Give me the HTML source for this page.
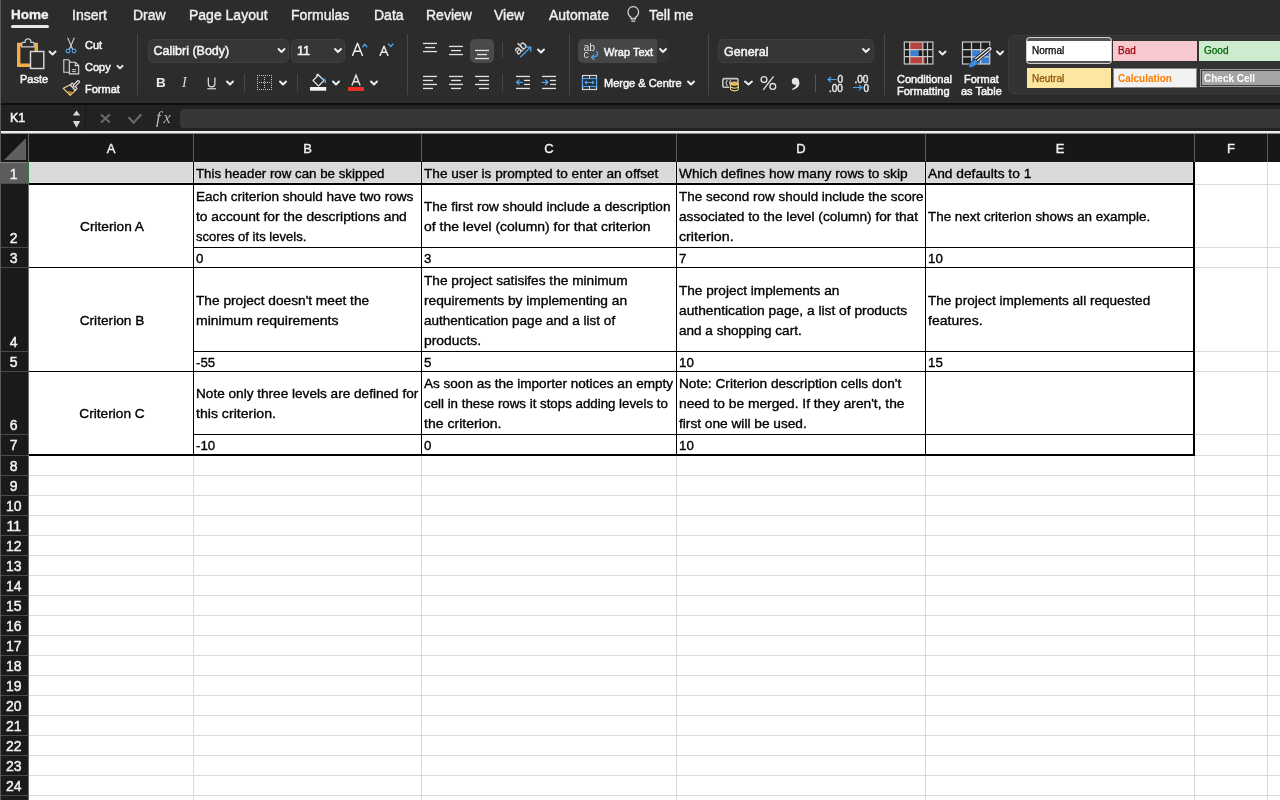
<!DOCTYPE html>
<html><head><meta charset="utf-8"><title>Excel</title>
<style>
*{margin:0;padding:0;box-sizing:border-box}
html,body{width:1280px;height:800px;overflow:hidden}
body{-webkit-font-smoothing:antialiased;background:#2c2c2c;font-family:"Liberation Sans",sans-serif;position:relative;color:#e8e8e8}
.a{position:absolute}
.tab{position:absolute;top:7px;font-size:14px;line-height:16px;color:#f0f0f0;white-space:nowrap;-webkit-text-stroke:0.4px #f0f0f0}
.rl{position:absolute;font-size:12px;line-height:14px;color:#ececec;white-space:nowrap}
.sep{position:absolute;width:1px;background:#4a4a4a}
.chev{position:absolute}
.cell{position:absolute;color:#000;font-size:13.3px;line-height:20px;white-space:nowrap;-webkit-text-stroke:0.35px #000}
.hdr{position:absolute;top:134px;height:27px;background:#171717;color:#f2f2f2;font-size:13px;text-align:center;line-height:29px;-webkit-text-stroke:0.35px #f2f2f2}
.rh{position:absolute;left:0.5px;width:26.5px;color:#f2f2f2;font-size:14px;text-align:center;-webkit-text-stroke:0.45px #f2f2f2}
</style></head>
<body><div style="position:absolute;left:0;top:0;width:1280px;height:800px;will-change:transform">
<!-- ribbon backgrounds -->
<div class="a" style="left:0;top:103px;width:1280px;height:2px;background:#0e0e0e"></div>
<div class="a" style="left:0;top:105px;width:1280px;height:26px;background:#222222"></div>
<div class="a" style="left:180px;top:109px;width:1100px;height:19px;border-radius:4px 0 0 4px;background:#373737"></div>
<div class="a" style="left:85px;top:105px;width:1px;height:26px;background:#1a1a1a"></div>
<!-- dropdown boxes -->
<div class="a" style="left:148px;top:39px;width:141px;height:24px;border-radius:5px;background:#363636;border:1px solid #3f3f3f"></div>
<div class="a" style="left:291px;top:39px;width:54px;height:24px;border-radius:5px;background:#363636;border:1px solid #3f3f3f"></div>
<div class="a" style="left:718px;top:39px;width:156px;height:24px;border-radius:5px;background:#363636;border:1px solid #3f3f3f"></div>
<div class="a" style="left:470px;top:39px;width:24px;height:24px;border-radius:5px;background:#4a4a4a"></div>
<div class="a" style="left:578px;top:39px;width:79px;height:24px;border-radius:5px 0 0 5px;background:#464646"></div>
<div class="a" style="left:657px;top:39px;width:12px;height:24px;border-radius:0 5px 5px 0;background:#313131"></div>
<!-- styles gallery -->
<div class="a" style="left:1008px;top:35px;width:280px;height:59px;border-radius:6px;background:#333333;border:1px solid #3c3c3c"></div>
<div class="a" style="left:1026px;top:37px;width:86px;height:27px;border-radius:4px;background:#cfcfcf"></div>
<div class="a" style="left:1027px;top:38px;width:84px;height:25px;border-radius:3px;background:#555555"></div>
<div class="a" style="left:1027px;top:41px;width:84px;height:20px;background:#ffffff"></div>
<div class="a" style="left:1113px;top:41px;width:84px;height:20px;background:#f7c9cf"></div>
<div class="a" style="left:1199px;top:41px;width:90px;height:20px;background:#cdeccf"></div>
<div class="a" style="left:1027px;top:68px;width:84px;height:20px;background:#fbe7a1"></div>
<div class="a" style="left:1113px;top:68px;width:84px;height:20px;background:#f2f2f2;border:1px solid #8a8a8a"></div>
<div class="a" style="left:1200px;top:69px;width:90px;height:18px;background:#9a9a9a"></div>
<div class="a" style="left:1201px;top:70px;width:90px;height:16px;background:#3c3c3c"></div>
<div class="a" style="left:1202px;top:71px;width:90px;height:14px;background:#a5a5a5"></div>

<svg class="a" style="left:0;top:0" width="1280" height="131" viewBox="0 0 1280 131">
<g font-family="Liberation Sans" fill="#f4f4f4" stroke="#f4f4f4" stroke-width="0.5" font-size="11">
 <text x="20" y="83">Paste</text>
 <text x="85" y="49">Cut</text>
 <text x="85" y="71">Copy</text>
 <text x="85" y="93">Format</text>
 <text x="153.5" y="55" font-size="12.5">Calibri (Body)</text>
 <text x="297" y="55" font-size="12.5">11</text>
 <text x="604" y="55.5">Wrap Text</text>
 <text x="604" y="87">Merge &amp; Centre</text>
 <text x="724" y="55.5" font-size="12.5">General</text>
 <text x="897" y="83">Conditional</text>
 <text x="897" y="95">Formatting</text>
 <text x="964" y="83">Format</text>
 <text x="961" y="95">as Table</text>
 <text x="10" y="122" font-size="12.5">K1</text>
</g>
<g font-family="Liberation Sans" font-size="10" stroke-width="0.25">
 <text x="1032" y="54" fill="#000" stroke="#000">Normal</text>
 <text x="1118" y="54" fill="#9c0006" stroke="#9c0006">Bad</text>
 <text x="1204" y="54" fill="#006100" stroke="#006100">Good</text>
 <text x="1032" y="81.5" fill="#8a5200" stroke="#8a5200">Neutral</text>
 <text x="1118" y="81.5" fill="#fa7d00" font-weight="bold">Calculation</text>
 <text x="1204" y="81.5" fill="#fff" font-weight="bold">Check Cell</text>
</g>
<!-- separators -->
<g fill="#474747">
 <rect x="137" y="34" width="1" height="61"/>
 <rect x="407" y="34" width="1" height="61"/>
 <rect x="569" y="34" width="1" height="61"/>
 <rect x="708" y="34" width="1" height="61"/>
 <rect x="884" y="34" width="1" height="61"/>
 <rect x="244" y="74" width="1" height="18"/>
 <rect x="297" y="74" width="1" height="18"/>
 <rect x="502" y="42" width="1" height="16"/>
 <rect x="502" y="74" width="1" height="18"/>
 <rect x="815" y="74" width="1" height="18" fill="#555"/>
</g>
<!-- chevrons -->
<g fill="none" stroke="#f0f0f0" stroke-width="1.9" stroke-linecap="round" stroke-linejoin="round">
 <polyline points="49.5,51.5 52.5,54.5 55.5,51.5"/>
 <polyline points="117.5,65.8 120,68.3 122.5,65.8"/>
 <polyline points="278.5,49 281.5,52 284.5,49"/>
 <polyline points="335,49 338,52 341,49"/>
 <polyline points="227,81.5 230,84.5 233,81.5"/>
 <polyline points="280,81.5 283,84.5 286,81.5"/>
 <polyline points="333,81.5 336,84.5 339,81.5"/>
 <polyline points="371,81.5 374,84.5 377,81.5"/>
 <polyline points="538,49.5 541,52.5 544,49.5"/>
 <polyline points="660,49 663,52 666,49"/>
 <polyline points="688,81.5 691,84.5 694,81.5"/>
 <polyline points="863,49 866,52 869,49"/>
 <polyline points="745,81.5 748.5,84.5 752,81.5"/>
 <polyline points="939.5,51.5 942.5,54.5 945.5,51.5"/>
 <polyline points="997,51.5 1000,54.5 1003,51.5"/>
</g>
</svg>
<svg class="a" style="left:0;top:0" width="1280" height="131" viewBox="0 0 1280 131">
<!-- Paste -->
<path d="M30,65.3 H18.7 V44.5 H36.3 V51" fill="none" stroke="#f2ad45" stroke-width="3.4"/>
<path d="M21.8,46.8 V43.4 Q21.8,42.4 22.8,42.4 H25 Q25,38.9 28,38.9 Q31,38.9 31,42.4 H33.2 Q34.2,42.4 34.2,43.4 V46.8 Z" fill="#2c2c2c" stroke="#cdcdcd" stroke-width="1.2"/>
<rect x="30.5" y="51.5" width="13.3" height="17" fill="#2c2c2c" stroke="#dcdcdc" stroke-width="1.4"/>
<!-- Scissors -->
<g fill="none">
 <path d="M67.6,37.6 L72.6,49.3 M74.4,37.6 L69.4,49.3" stroke="#d8d8d8" stroke-width="1.1"/>
 <circle cx="68" cy="51" r="1.9" stroke="#4ea1ea" stroke-width="1.1"/>
 <circle cx="74" cy="51" r="1.9" stroke="#4ea1ea" stroke-width="1.1"/>
</g>
<!-- Copy -->
<g fill="#2c2c2c" stroke="#d8d8d8" stroke-width="1.1">
 <path d="M63.8,59.8 H68.5 L70,61.5 V72.2 H63.8 Z"/>
 <path d="M69.3,62.2 H75.3 L78.7,65.6 V73.9 H69.3 Z"/>
 <path d="M75.3,62.2 V65.6 H78.7" fill="none"/>
 <path d="M71.8,69.6 H76 M71.8,71.6 H76" stroke-width="0.9"/>
</g>
<!-- Format painter -->
<g stroke-linejoin="round">
 <polygon points="63.3,88.3 70.3,84.8 75.3,90.3 70.2,95.3" fill="#2c2c2c" stroke="#f1da8c" stroke-width="1.1"/>
 <polygon points="66.8,90.9 72.8,91.9 70,94.4" fill="#d9841f"/>
 <polygon points="70.3,84.8 72.3,83 77,88.3 75.3,90.3" fill="#2c2c2c" stroke="#e8e8e8" stroke-width="1.1"/>
 <path d="M74.3,85.8 L78.3,81.8" stroke="#e8e8e8" stroke-width="3.4" stroke-linecap="round"/>
 <path d="M74.3,85.8 L78.3,81.8" stroke="#2c2c2c" stroke-width="1.2" stroke-linecap="round"/>
</g>
<!-- Font grow / shrink -->
<g fill="none" stroke="#ededed" stroke-width="1.45" stroke-linejoin="round">
 <path d="M352.4,56 L357.5,43.3 L362.6,56 M354.4,51.2 H360.6"/>
 <path d="M379.9,56 L384,46.2 L388.1,56 M381.6,52.3 H386.4"/>
</g>
<g fill="none" stroke="#4ea1ea" stroke-width="1.3" stroke-linecap="round">
 <path d="M362.5,46.8 L364.8,44.2 L367,46.8"/>
 <path d="M388.5,44 L390.8,46.6 L393,44"/>
</g>
<!-- B I U -->
<text x="156" y="87.3" font-family="Liberation Sans" font-weight="bold" font-size="13.5" fill="#ececec">B</text>
<text x="182" y="87" font-family="Liberation Serif" font-style="italic" font-size="14" fill="#dcdcdc">I</text>
<path d="M208.3,77.5 V83.5 a3.3,3.3 0 0 0 6.6,0 V77.5" fill="none" stroke="#e6e6e6" stroke-width="1.2"/>
<rect x="207.3" y="88.2" width="8.6" height="1.1" fill="#e6e6e6"/>
<!-- Borders dotted --><g fill="#c4c4c4"><rect x="257" y="75" width="1" height="1"/><rect x="257" y="77" width="1" height="1"/><rect x="257" y="79" width="1" height="1"/><rect x="257" y="81" width="1" height="1"/><rect x="257" y="83" width="1" height="1"/><rect x="257" y="85" width="1" height="1"/><rect x="257" y="87" width="1" height="1"/><rect x="257" y="89" width="1" height="1"/><rect x="259" y="75" width="1" height="1"/><rect x="259" y="82" width="1" height="1"/><rect x="259" y="89" width="1" height="1"/><rect x="261" y="75" width="1" height="1"/><rect x="261" y="82" width="1" height="1"/><rect x="261" y="89" width="1" height="1"/><rect x="263" y="75" width="1" height="1"/><rect x="263" y="82" width="1" height="1"/><rect x="263" y="89" width="1" height="1"/><rect x="264" y="77" width="1" height="1"/><rect x="264" y="79" width="1" height="1"/><rect x="264" y="81" width="1" height="1"/><rect x="264" y="83" width="1" height="1"/><rect x="264" y="85" width="1" height="1"/><rect x="264" y="87" width="1" height="1"/><rect x="265" y="75" width="1" height="1"/><rect x="265" y="82" width="1" height="1"/><rect x="265" y="89" width="1" height="1"/><rect x="267" y="75" width="1" height="1"/><rect x="267" y="82" width="1" height="1"/><rect x="267" y="89" width="1" height="1"/><rect x="269" y="75" width="1" height="1"/><rect x="269" y="82" width="1" height="1"/><rect x="269" y="89" width="1" height="1"/><rect x="271" y="75" width="1" height="1"/><rect x="271" y="77" width="1" height="1"/><rect x="271" y="79" width="1" height="1"/><rect x="271" y="81" width="1" height="1"/><rect x="271" y="83" width="1" height="1"/><rect x="271" y="85" width="1" height="1"/><rect x="271" y="87" width="1" height="1"/><rect x="271" y="89" width="1" height="1"/></g>
<!-- Fill bucket -->
<path d="M313,80.5 L318.5,75 L324,80.5 L318.5,86 Z" fill="#2c2c2c" stroke="#e0e0e0" stroke-width="1.2" stroke-linejoin="round"/>
<path d="M316,75.5 L318.5,73.8" stroke="#e0e0e0" stroke-width="1.1"/>
<path d="M322.5,79 Q325.5,78.5 325.5,83" fill="none" stroke="#5aa8ea" stroke-width="1.5"/>
<rect x="310" y="87" width="16.2" height="3.7" fill="#f4f4f4"/>
<!-- Font color -->
<path d="M351.9,85.5 L356,75.2 L360.1,85.5 M353.4,81.8 H358.6" fill="none" stroke="#e6e6e6" stroke-width="1.4"/>
<rect x="348" y="87" width="16" height="4" fill="#e8312a"/>
<!-- Alignment icons -->
<g fill="#e3e3e3">
 <rect x="423" y="42.8" width="14" height="1.3"/><rect x="425" y="46.9" width="10" height="1.3"/><rect x="423" y="50.9" width="14" height="1.3"/>
 <rect x="449" y="45.8" width="14" height="1.3"/><rect x="451" y="49.9" width="10" height="1.3"/><rect x="449" y="53.9" width="14" height="1.3"/>
 <rect x="475" y="49.8" width="14" height="1.3"/><rect x="477" y="53.9" width="10" height="1.3"/><rect x="475" y="57.9" width="14" height="1.3"/>
 <rect x="423" y="75.8" width="14" height="1.3"/><rect x="423" y="79.8" width="10" height="1.3"/><rect x="423" y="83.8" width="14" height="1.3"/><rect x="423" y="87.8" width="10" height="1.3"/>
 <rect x="449" y="75.8" width="14" height="1.3"/><rect x="451" y="79.8" width="10" height="1.3"/><rect x="449" y="83.8" width="14" height="1.3"/><rect x="451" y="87.8" width="10" height="1.3"/>
 <rect x="475" y="75.8" width="14" height="1.3"/><rect x="479" y="79.8" width="10" height="1.3"/><rect x="475" y="83.8" width="14" height="1.3"/><rect x="479" y="87.8" width="10" height="1.3"/>
 <rect x="516" y="75.8" width="14" height="1.3"/><rect x="524" y="79.8" width="6" height="1.3"/><rect x="524" y="83.8" width="6" height="1.3"/><rect x="516" y="87.8" width="14" height="1.3"/>
 <rect x="542" y="75.8" width="14" height="1.3"/><rect x="550" y="79.8" width="6" height="1.3"/><rect x="550" y="83.8" width="6" height="1.3"/><rect x="542" y="87.8" width="14" height="1.3"/>
</g>
<g fill="none" stroke="#4ea1ea" stroke-width="1.3" stroke-linecap="round" stroke-linejoin="round">
 <path d="M516.5,82.3 H522.5 M519,80 L516.5,82.3 L519,84.6"/>
 <path d="M542,82.3 H548 M545.5,80 L548,82.3 L545.5,84.6"/>
</g>
<!-- Orientation -->
<text x="0" y="0" font-family="Liberation Sans" font-size="12" fill="#e6e6e6" stroke="#e6e6e6" stroke-width="0.25" transform="translate(518.3,55.3) rotate(-45)">ab</text>
<path d="M520.3,57.3 L530.5,47.2 M525.8,47 H530.8 V52" fill="none" stroke="#4ea1ea" stroke-width="1.25"/>
<!-- Wrap text -->
<text x="583.5" y="51" font-family="Liberation Sans" font-size="10.5" fill="#dedede">ab</text>
<text x="583.5" y="58.3" font-family="Liberation Sans" font-size="10.5" fill="#dedede">c</text>
<path d="M596.5,51.5 Q598.5,53 597,55.5 Q595.5,57.3 591.5,57.3 M593.8,55 L591.5,57.3 L593.8,59.6" fill="none" stroke="#4ea1ea" stroke-width="1.25" stroke-linecap="round"/>
<!-- Merge -->
<g fill="none">
 <rect x="582.5" y="75.5" width="14" height="14" stroke="#d8d8d8" stroke-width="1.2"/>
 <rect x="582.5" y="78.5" width="14" height="8" stroke="#4ea1ea" stroke-width="1.2" fill="#2c2c2c"/>
 <path d="M589.5,75.5 V78.5 M589.5,86.5 V89.5" stroke="#d8d8d8" stroke-width="1"/>
 <path d="M585,82.5 H594 M587,80.8 L585,82.5 L587,84.2 M592,80.8 L594,82.5 L592,84.2" stroke="#4ea1ea" stroke-width="1.1"/>
</g>
<!-- Currency -->
<rect x="722.8" y="78.6" width="15.2" height="8.6" rx="1.5" fill="none" stroke="#c8c8c8" stroke-width="1.6"/>
<path d="M727.6,80.3 A2.6,3 0 0 0 727.6,85.7 M731,80.3 A2.6,3 0 0 0 731,85.7" fill="none" stroke="#c8c8c8" stroke-width="1.15"/>
<rect x="729.3" y="81.4" width="10.4" height="10.8" rx="4" fill="#1a1a1a"/>
<g fill="none" stroke="#e8d588" stroke-width="1.2">
 <path d="M730.5,83.6 V89 A3.9,1.8 0 0 0 738.3,89 V83.6"/>
 <path d="M730.5,86.3 A3.9,1.8 0 0 0 738.3,86.3"/>
</g>
<ellipse cx="734.4" cy="83.6" rx="3.9" ry="1.6" fill="#e9a944" stroke="#efe09a" stroke-width="1.1"/>
<!-- % and comma -->
<g fill="none" stroke="#e6e6e6" stroke-width="1.3"><circle cx="764" cy="79.6" r="2.9"/><circle cx="772.8" cy="86.4" r="2.9"/><path d="M773.5,76.3 L763.3,89.8"/></g>
<circle cx="795.3" cy="81.2" r="3.5" fill="#e6e6e6"/><path d="M797.2,78.5 Q799.9,80.6 799.3,84.6 Q798.3,88.6 792.4,90 L792,89 Q795.8,87.4 796.4,84 Z" fill="#e6e6e6"/>
<!-- decimals -->
<g font-family="Liberation Sans" font-size="10" fill="#e6e6e6" stroke="#e6e6e6" stroke-width="0.45">
 <text x="837.5" y="83">0</text>
 <text x="829" y="91.5">.00</text>
 <text x="854.5" y="83">.00</text>
 <text x="863.5" y="91.5">0</text>
</g>
<path d="M828,79.5 H836.5 M831,77 L828,79.5 L831,82" fill="none" stroke="#4ea1ea" stroke-width="1.2"/>
<path d="M853,87.5 H862 M859,85 L862,87.5 L859,90" fill="none" stroke="#4ea1ea" stroke-width="1.2"/>
<!-- Conditional formatting -->
<rect x="904.3" y="42" width="28.6" height="22" fill="#1e1e1e"/>
<rect x="909.7" y="42" width="12.8" height="7.6" fill="#b8433e"/>
<rect x="909.7" y="49.6" width="9" height="7" fill="#3a7fd0"/>
<rect x="909.7" y="56.6" width="15" height="7.5" fill="#b8433e"/>
<g fill="none" stroke="#c8c8c8" stroke-width="1.2">
 <rect x="904.3" y="42" width="28.6" height="22"/>
 <path d="M909.7,42 V64 M922.8,42 V64 M927.5,42 V64 M904.3,49.6 H932.9 M904.3,56.6 H932.9"/>
</g>
<!-- Format as table -->
<rect x="962.5" y="42" width="27.3" height="22" fill="#1e1e1e"/>
<rect x="971.5" y="49.6" width="18.3" height="14.5" fill="#3a7fd0"/>
<g fill="none" stroke="#c8c8c8" stroke-width="1.2">
 <rect x="962.5" y="42" width="27.3" height="22"/>
 <path d="M971.5,42 V64 M980.7,42 V64 M962.5,49.6 H989.8 M962.5,56.8 H989.8"/>
</g>
<path d="M975.8,60.2 L989.6,48.8" stroke="#1e1e1e" stroke-width="5.6" stroke-linecap="round"/>
<path d="M975.8,60.2 L989.6,48.8" stroke="#e6e6e6" stroke-width="4" stroke-linecap="round"/>
<path d="M976.2,59.9 L989.4,49" stroke="#2a2a2a" stroke-width="1.5" stroke-linecap="round"/>
<path d="M968.3,67.8 C968.8,63.5 971.5,60.3 975.2,59.2 L978,62 C977,65.8 973,67.8 968.3,67.8 Z" fill="#3b8be0" stroke="#1e1e1e" stroke-width="0.7"/>
<!-- Formula bar -->
<path d="M72.8,115.6 L76.5,110.6 L80.2,115.6 Z" fill="#d8d8d8"/>
<path d="M72.8,121 L76.5,127.8 L80.2,121 Z" fill="#d8d8d8"/>
<path d="M101,114.5 L109.8,122.5 M109.8,114.5 L101,122.5" stroke="#6a6a6a" stroke-width="2"/>
<path d="M128.6,117.2 L133.6,122.6 L141.4,114.2" fill="none" stroke="#6a6a6a" stroke-width="2.1"/>
<text x="156" y="122.8" font-family="Liberation Serif" font-style="italic" font-size="17.5" fill="#b8b8b8">f</text>
<text x="163.5" y="122.8" font-family="Liberation Serif" font-style="italic" font-size="16" fill="#b8b8b8">x</text>
<!-- lightbulb -->
<path d="M631,19 V17.3 Q628,15.3 628,11.9 a5.3,5.3 0 0 1 10.6,0 Q638.6,15.3 635.6,17.3 V19 Z" fill="none" stroke="#dcdcdc" stroke-width="1.15" stroke-linejoin="round"/>
<path d="M631.2,18.3 H635.4" stroke="#dcdcdc" stroke-width="0.9"/>
<path d="M631.8,21.2 H634.8" stroke="#dcdcdc" stroke-width="1.3" stroke-linecap="round"/>
</svg>

<div class="tab" style="left:11px;font-weight:bold;font-size:13.5px;top:7.2px;">Home</div>
<div class="tab" style="left:72px;">Insert</div>
<div class="tab" style="left:133px;">Draw</div>
<div class="tab" style="left:189px;">Page Layout</div>
<div class="tab" style="left:291px;">Formulas</div>
<div class="tab" style="left:374px;">Data</div>
<div class="tab" style="left:426px;">Review</div>
<div class="tab" style="left:494px;">View</div>
<div class="tab" style="left:549px;">Automate</div>
<div class="tab" style="left:649px;">Tell me</div>
<div class="a" style="left:11px;top:25px;width:38px;height:3px;border-radius:2px;background:#e6e6e6"></div>
<div class="a" style="left:29px;top:162px;width:1251px;height:638px;background:#fff"></div>
<div class="a" style="left:29px;top:475px;width:1251px;height:1px;background:#dadada"></div>
<div class="a" style="left:29px;top:495px;width:1251px;height:1px;background:#dadada"></div>
<div class="a" style="left:29px;top:515px;width:1251px;height:1px;background:#dadada"></div>
<div class="a" style="left:29px;top:535px;width:1251px;height:1px;background:#dadada"></div>
<div class="a" style="left:29px;top:555px;width:1251px;height:1px;background:#dadada"></div>
<div class="a" style="left:29px;top:575px;width:1251px;height:1px;background:#dadada"></div>
<div class="a" style="left:29px;top:595px;width:1251px;height:1px;background:#dadada"></div>
<div class="a" style="left:29px;top:615px;width:1251px;height:1px;background:#dadada"></div>
<div class="a" style="left:29px;top:635px;width:1251px;height:1px;background:#dadada"></div>
<div class="a" style="left:29px;top:655px;width:1251px;height:1px;background:#dadada"></div>
<div class="a" style="left:29px;top:675px;width:1251px;height:1px;background:#dadada"></div>
<div class="a" style="left:29px;top:695px;width:1251px;height:1px;background:#dadada"></div>
<div class="a" style="left:29px;top:715px;width:1251px;height:1px;background:#dadada"></div>
<div class="a" style="left:29px;top:735px;width:1251px;height:1px;background:#dadada"></div>
<div class="a" style="left:29px;top:755px;width:1251px;height:1px;background:#dadada"></div>
<div class="a" style="left:29px;top:775px;width:1251px;height:1px;background:#dadada"></div>
<div class="a" style="left:29px;top:795px;width:1251px;height:1px;background:#dadada"></div>
<div class="a" style="left:29px;top:815px;width:1251px;height:1px;background:#dadada"></div>
<div class="a" style="left:193px;top:456px;width:1px;height:344px;background:#dadada"></div>
<div class="a" style="left:421px;top:456px;width:1px;height:344px;background:#dadada"></div>
<div class="a" style="left:676px;top:456px;width:1px;height:344px;background:#dadada"></div>
<div class="a" style="left:925px;top:456px;width:1px;height:344px;background:#dadada"></div>
<div class="a" style="left:1194px;top:456px;width:1px;height:344px;background:#dadada"></div>
<div class="a" style="left:1267px;top:456px;width:1px;height:344px;background:#dadada"></div>
<div class="a" style="left:1267px;top:162px;width:1px;height:294px;background:#dadada"></div>
<div class="a" style="left:1195px;top:184px;width:85px;height:1px;background:#dadada"></div>
<div class="a" style="left:1195px;top:247px;width:85px;height:1px;background:#dadada"></div>
<div class="a" style="left:1195px;top:267px;width:85px;height:1px;background:#dadada"></div>
<div class="a" style="left:1195px;top:351px;width:85px;height:1px;background:#dadada"></div>
<div class="a" style="left:1195px;top:371px;width:85px;height:1px;background:#dadada"></div>
<div class="a" style="left:1195px;top:434px;width:85px;height:1px;background:#dadada"></div>
<div class="a" style="left:1195px;top:455px;width:85px;height:1px;background:#dadada"></div>
<div class="a" style="left:29px;top:162px;width:1164px;height:21px;background:#d9d9d9"></div>
<div class="a" style="left:29px;top:183px;width:1166px;height:2px;background:#000"></div>
<div class="a" style="left:194px;top:247px;width:999px;height:1px;background:#000"></div>
<div class="a" style="left:29px;top:267px;width:1164px;height:1px;background:#000"></div>
<div class="a" style="left:194px;top:351px;width:999px;height:1px;background:#000"></div>
<div class="a" style="left:29px;top:371px;width:1164px;height:1px;background:#000"></div>
<div class="a" style="left:194px;top:434px;width:999px;height:1px;background:#000"></div>
<div class="a" style="left:29px;top:454px;width:1166px;height:2px;background:#000"></div>
<div class="a" style="left:29px;top:162px;width:1164px;height:1px;background:#e3e3e3"></div>
<div class="a" style="left:29px;top:182px;width:1164px;height:1px;background:#e3e3e3"></div>
<div class="a" style="left:192px;top:162px;width:1px;height:21px;background:#e3e3e3"></div>
<div class="a" style="left:194px;top:162px;width:1px;height:21px;background:#e3e3e3"></div>
<div class="a" style="left:420px;top:162px;width:1px;height:21px;background:#e3e3e3"></div>
<div class="a" style="left:422px;top:162px;width:1px;height:21px;background:#e3e3e3"></div>
<div class="a" style="left:675px;top:162px;width:1px;height:21px;background:#e3e3e3"></div>
<div class="a" style="left:677px;top:162px;width:1px;height:21px;background:#e3e3e3"></div>
<div class="a" style="left:924px;top:162px;width:1px;height:21px;background:#e3e3e3"></div>
<div class="a" style="left:926px;top:162px;width:1px;height:21px;background:#e3e3e3"></div>
<div class="a" style="left:1192px;top:162px;width:1px;height:21px;background:#e3e3e3"></div>
<div class="a" style="left:193px;top:162px;width:1px;height:293px;background:#000"></div>
<div class="a" style="left:421px;top:162px;width:1px;height:293px;background:#000"></div>
<div class="a" style="left:676px;top:162px;width:1px;height:293px;background:#000"></div>
<div class="a" style="left:925px;top:162px;width:1px;height:293px;background:#000"></div>
<div class="a" style="left:1193px;top:162px;width:2px;height:294px;background:#000"></div>
<div class="cell" style="left:196px;top:163.5px"><div>This header row can be skipped</div></div>
<div class="cell" style="left:424px;top:163.5px"><div style="transform-origin:0 0;transform:scaleX(1.024)">The user is prompted to enter an offset</div></div>
<div class="cell" style="left:679px;top:163.5px"><div style="transform-origin:0 0;transform:scaleX(1.031)">Which defines how many rows to skip</div></div>
<div class="cell" style="left:928px;top:163.5px"><div style="transform-origin:0 0;transform:scaleX(1.035)">And defaults to 1</div></div>
<div class="cell" style="left:196px;top:187.0px"><div style="transform-origin:0 0;transform:scaleX(1.021)">Each criterion should have two rows</div><div style="transform-origin:0 0;transform:scaleX(1.037)">to account for the descriptions and</div><div style="transform-origin:0 0;transform:scaleX(0.982)">scores of its levels.</div></div>
<div class="cell" style="left:424px;top:197.0px"><div style="transform-origin:0 0;transform:scaleX(1.023)">The first row should include a description</div><div style="transform-origin:0 0;transform:scaleX(1.050)">of the level (column) for that criterion</div></div>
<div class="cell" style="left:679px;top:187.0px"><div style="transform-origin:0 0;transform:scaleX(1.012)">The second row should include the score</div><div style="transform-origin:0 0;transform:scaleX(1.030)">associated to the level (column) for that</div><div style="transform-origin:0 0;transform:scaleX(1.071)">criterion.</div></div>
<div class="cell" style="left:928px;top:207.0px"><div style="transform-origin:0 0;transform:scaleX(1.009)">The next criterion shows an example.</div></div>
<div class="cell" style="left:196px;top:248.5px"><div>0</div></div>
<div class="cell" style="left:424px;top:248.5px"><div>3</div></div>
<div class="cell" style="left:679px;top:248.5px"><div>7</div></div>
<div class="cell" style="left:928px;top:248.5px"><div>10</div></div>
<div class="cell" style="left:196px;top:290.5px"><div style="transform-origin:0 0;transform:scaleX(1.030)">The project doesn&#x27;t meet the</div><div style="transform-origin:0 0;transform:scaleX(1.054)">minimum requirements</div></div>
<div class="cell" style="left:424px;top:270.5px"><div style="transform-origin:0 0;transform:scaleX(1.028)">The project satisifes the minimum</div><div style="transform-origin:0 0;transform:scaleX(1.033)">requirements by implementing an</div><div style="transform-origin:0 0;transform:scaleX(1.018)">authentication page and a list of</div><div style="transform-origin:0 0;transform:scaleX(1.043)">products.</div></div>
<div class="cell" style="left:679px;top:280.5px"><div style="transform-origin:0 0;transform:scaleX(1.023)">The project implements an</div><div style="transform-origin:0 0;transform:scaleX(1.036)">authentication page, a list of products</div><div style="transform-origin:0 0;transform:scaleX(1.018)">and a shopping cart.</div></div>
<div class="cell" style="left:928px;top:290.5px"><div style="transform-origin:0 0;transform:scaleX(1.019)">The project implements all requested</div><div style="transform-origin:0 0;transform:scaleX(1.054)">features.</div></div>
<div class="cell" style="left:196px;top:352.5px"><div>-55</div></div>
<div class="cell" style="left:424px;top:352.5px"><div>5</div></div>
<div class="cell" style="left:679px;top:352.5px"><div>10</div></div>
<div class="cell" style="left:928px;top:352.5px"><div>15</div></div>
<div class="cell" style="left:196px;top:384.0px"><div style="transform-origin:0 0;transform:scaleX(1.023)">Note only three levels are defined for</div><div style="transform-origin:0 0;transform:scaleX(1.061)">this criterion.</div></div>
<div class="cell" style="left:424px;top:374.0px"><div style="transform-origin:0 0;transform:scaleX(1.018)">As soon as the importer notices an empty</div><div>cell in these rows it stops adding levels to</div><div style="transform-origin:0 0;transform:scaleX(1.059)">the criterion.</div></div>
<div class="cell" style="left:679px;top:374.0px"><div style="transform-origin:0 0;transform:scaleX(1.028)">Note: Criterion description cells don&#x27;t</div><div style="transform-origin:0 0;transform:scaleX(1.036)">need to be merged. If they aren&#x27;t, the</div><div style="transform-origin:0 0;transform:scaleX(1.029)">first one will be used.</div></div>
<div class="cell" style="left:196px;top:435.5px"><div>-10</div></div>
<div class="cell" style="left:424px;top:435.5px"><div>0</div></div>
<div class="cell" style="left:679px;top:435.5px"><div>10</div></div>
<div class="cell" style="left:29.5px;top:217.0px;width:164px;text-align:center;transform:scaleX(1.03)">Criterion A</div>
<div class="cell" style="left:29.5px;top:310.5px;width:164px;text-align:center;transform:scaleX(1.03)">Criterion B</div>
<div class="cell" style="left:29.5px;top:404.0px;width:164px;text-align:center;transform:scaleX(1.03)">Criterion C</div>
<div class="a" style="left:0;top:133px;width:1280px;height:29px;background:#171717"></div>
<div class="a" style="left:0;top:131px;width:1280px;height:2px;background:#ececec"></div>
<div class="a" style="left:0;top:133px;width:1280px;height:1px;background:#8a8a8a"></div>
<div class="hdr" style="left:29px;width:164px">A</div>
<div class="hdr" style="left:194px;width:227px">B</div>
<div class="hdr" style="left:422px;width:254px">C</div>
<div class="hdr" style="left:677px;width:248px">D</div>
<div class="hdr" style="left:926px;width:268px">E</div>
<div class="hdr" style="left:1195px;width:72px">F</div>
<div class="hdr" style="left:1268px;width:32px"></div>
<div class="a" style="left:193px;top:134px;width:1px;height:28px;background:#5a5a5a"></div>
<div class="a" style="left:421px;top:134px;width:1px;height:28px;background:#5a5a5a"></div>
<div class="a" style="left:676px;top:134px;width:1px;height:28px;background:#5a5a5a"></div>
<div class="a" style="left:925px;top:134px;width:1px;height:28px;background:#5a5a5a"></div>
<div class="a" style="left:1194px;top:134px;width:1px;height:28px;background:#5a5a5a"></div>
<div class="a" style="left:1267px;top:134px;width:1px;height:28px;background:#5a5a5a"></div>
<div class="a" style="left:28px;top:134px;width:1px;height:28px;background:#8a8a8a"></div>
<svg class="a" style="left:0;top:134px" width="28" height="28"><polygon points="4,26 26,26 26,4" fill="#5f5f5f"/></svg>
<div class="a" style="left:0;top:162px;width:29px;height:638px;background:#1a1a1a"></div>
<div class="a" style="left:0;top:0;width:1px;height:800px;background:#5a5a5a"></div>
<div class="rh" style="background:#5c5c5c;top:162px;height:21px;line-height:20px;padding-top:2px">1</div>
<div class="rh" style="top:185px;height:62px;line-height:20px;padding-top:43px">2</div>
<div class="rh" style="top:248px;height:19px;line-height:20px;padding-top:0px">3</div>
<div class="rh" style="top:268px;height:83px;line-height:20px;padding-top:64px">4</div>
<div class="rh" style="top:352px;height:19px;line-height:20px;padding-top:0px">5</div>
<div class="rh" style="top:372px;height:62px;line-height:20px;padding-top:43px">6</div>
<div class="rh" style="top:435px;height:19px;line-height:20px;padding-top:0px">7</div>
<div class="rh" style="top:456px;height:19px;line-height:20px;padding-top:0px">8</div>
<div class="rh" style="top:476px;height:19px;line-height:20px;padding-top:0px">9</div>
<div class="rh" style="top:496px;height:19px;line-height:20px;padding-top:0px">10</div>
<div class="rh" style="top:516px;height:19px;line-height:20px;padding-top:0px">11</div>
<div class="rh" style="top:536px;height:19px;line-height:20px;padding-top:0px">12</div>
<div class="rh" style="top:556px;height:19px;line-height:20px;padding-top:0px">13</div>
<div class="rh" style="top:576px;height:19px;line-height:20px;padding-top:0px">14</div>
<div class="rh" style="top:596px;height:19px;line-height:20px;padding-top:0px">15</div>
<div class="rh" style="top:616px;height:19px;line-height:20px;padding-top:0px">16</div>
<div class="rh" style="top:636px;height:19px;line-height:20px;padding-top:0px">17</div>
<div class="rh" style="top:656px;height:19px;line-height:20px;padding-top:0px">18</div>
<div class="rh" style="top:676px;height:19px;line-height:20px;padding-top:0px">19</div>
<div class="rh" style="top:696px;height:19px;line-height:20px;padding-top:0px">20</div>
<div class="rh" style="top:716px;height:19px;line-height:20px;padding-top:0px">21</div>
<div class="rh" style="top:736px;height:19px;line-height:20px;padding-top:0px">22</div>
<div class="rh" style="top:756px;height:19px;line-height:20px;padding-top:0px">23</div>
<div class="rh" style="top:776px;height:19px;line-height:20px;padding-top:0px">24</div>
<div class="rh" style="top:796px;height:19px;line-height:20px;padding-top:0px">25</div>
<div class="a" style="left:1px;top:183px;width:27px;height:1px;background:#4a4a4a"></div>
<div class="a" style="left:1px;top:247px;width:27px;height:1px;background:#4a4a4a"></div>
<div class="a" style="left:1px;top:267px;width:27px;height:1px;background:#4a4a4a"></div>
<div class="a" style="left:1px;top:351px;width:27px;height:1px;background:#4a4a4a"></div>
<div class="a" style="left:1px;top:371px;width:27px;height:1px;background:#4a4a4a"></div>
<div class="a" style="left:1px;top:434px;width:27px;height:1px;background:#4a4a4a"></div>
<div class="a" style="left:1px;top:455px;width:27px;height:1px;background:#4a4a4a"></div>
<div class="a" style="left:1px;top:475px;width:27px;height:1px;background:#4a4a4a"></div>
<div class="a" style="left:1px;top:495px;width:27px;height:1px;background:#4a4a4a"></div>
<div class="a" style="left:1px;top:515px;width:27px;height:1px;background:#4a4a4a"></div>
<div class="a" style="left:1px;top:535px;width:27px;height:1px;background:#4a4a4a"></div>
<div class="a" style="left:1px;top:555px;width:27px;height:1px;background:#4a4a4a"></div>
<div class="a" style="left:1px;top:575px;width:27px;height:1px;background:#4a4a4a"></div>
<div class="a" style="left:1px;top:595px;width:27px;height:1px;background:#4a4a4a"></div>
<div class="a" style="left:1px;top:615px;width:27px;height:1px;background:#4a4a4a"></div>
<div class="a" style="left:1px;top:635px;width:27px;height:1px;background:#4a4a4a"></div>
<div class="a" style="left:1px;top:655px;width:27px;height:1px;background:#4a4a4a"></div>
<div class="a" style="left:1px;top:675px;width:27px;height:1px;background:#4a4a4a"></div>
<div class="a" style="left:1px;top:695px;width:27px;height:1px;background:#4a4a4a"></div>
<div class="a" style="left:1px;top:715px;width:27px;height:1px;background:#4a4a4a"></div>
<div class="a" style="left:1px;top:735px;width:27px;height:1px;background:#4a4a4a"></div>
<div class="a" style="left:1px;top:755px;width:27px;height:1px;background:#4a4a4a"></div>
<div class="a" style="left:1px;top:775px;width:27px;height:1px;background:#4a4a4a"></div>
<div class="a" style="left:1px;top:795px;width:27px;height:1px;background:#4a4a4a"></div>
<div class="a" style="left:28px;top:134px;width:1px;height:666px;background:#6a6a6a"></div>
<div class="a" style="left:27px;top:162px;width:2px;height:21px;background:#2f7d44"></div>
<div class="a" style="left:0;top:162px;width:27px;height:1px;background:#858585"></div>

</div></body></html>
